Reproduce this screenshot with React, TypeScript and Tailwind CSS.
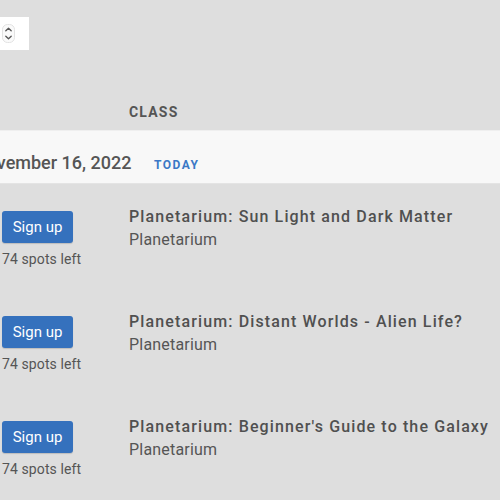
import React from "react";

const rows = [
  "Planetarium: Sun Light and Dark Matter",
  "Planetarium: Distant Worlds - Alien Life?",
  "Planetarium: Beginner's Guide to the Galaxy",
];

function Spinner() {
  return (
    <svg width="13" height="19" viewBox="0 0 13 19" fill="none">
      <rect x="0.5" y="0.5" width="12" height="18" rx="5" stroke="#e2e2e2" fill="#fafafa" />
      <path d="M3.8 6.8 L6.5 4.2 L9.2 6.8" stroke="#555" strokeWidth="1.3" strokeLinecap="round" strokeLinejoin="round" />
      <path d="M3.8 12.2 L6.5 14.8 L9.2 12.2" stroke="#555" strokeWidth="1.3" strokeLinecap="round" strokeLinejoin="round" />
    </svg>
  );
}

export default function App() {
  return (
    <div className="w-[500px] h-[500px] overflow-hidden bg-[#dedede] text-[#555] font-['Roboto',sans-serif]">
      <div className="pt-[17px]">
        <div className="w-[29px] h-[33px] bg-white flex items-center pl-[2px]">
          <Spinner />
        </div>
      </div>
      <div className="mt-[52px] h-[28px] pl-[129px] text-[14px] leading-[20px] font-bold tracking-[1.2px] text-[#555]">
        CLASS
      </div>
      <div className="h-[54px] bg-[#f8f8f8] border-t border-[#efefef] border-b border-b-[#e4e4e4] pt-[20px] flex items-baseline">
        <div className="ml-[-26px] w-[180px] text-[18px] leading-[24px] font-medium tracking-[0px] text-[#555] whitespace-nowrap">
          November 16, 2022
        </div>
        <div className="text-[12px] leading-[24px] font-bold tracking-[1.5px] text-[#3b78c6]">TODAY</div>
      </div>
      <div className="pt-[27px]">
        <div>
          {rows.map((t) => (
            <div key={t} className="h-[105px] flex">
              <div className="w-[129px] pl-[2px] flex flex-col items-start">
                <button className="w-[71px] h-[32px] rounded-[3px] bg-[#3571bd] text-white text-[15px] leading-[20px] shadow-[0_1px_1px_rgba(0,0,0,0.15)]">
                  Sign up
                </button>
                <div className="mt-[6px] text-[14px] leading-[20px] tracking-[0.1px] text-[#555] whitespace-nowrap">74 spots left</div>
              </div>
              <div className="mt-[-6px] whitespace-nowrap">
                <div className="text-[16px] leading-[23px] font-medium tracking-[1.12px] text-[#505050]">{t}</div>
                <div className="text-[16px] leading-[23px] tracking-[0.2px] text-[#555]">Planetarium</div>
              </div>
            </div>
          ))}
        </div>
      </div>
    </div>
  );
}
